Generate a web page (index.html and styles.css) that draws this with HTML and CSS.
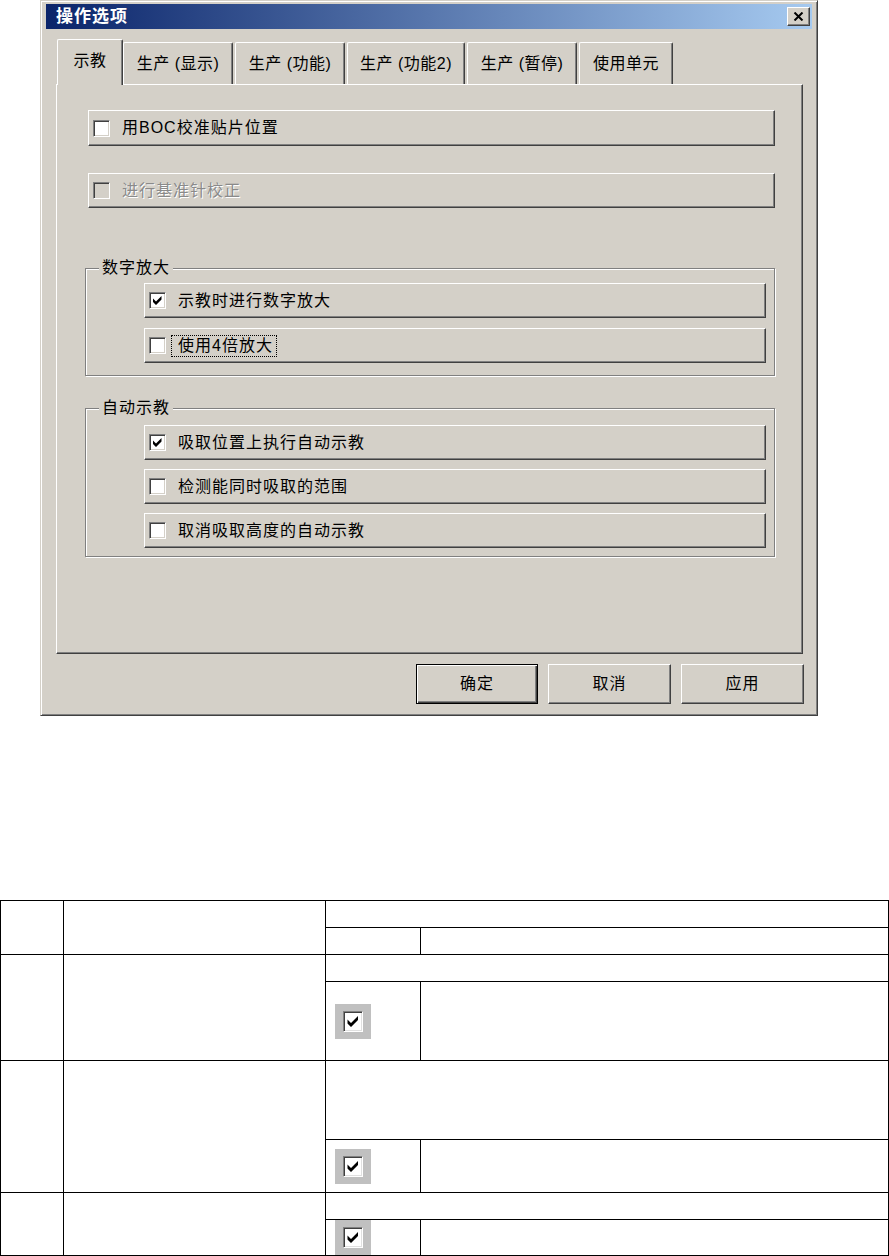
FILE: index.html
```html
<!DOCTYPE html>
<html lang="zh-CN">
<head>
<meta charset="utf-8">
<title>操作选项</title>
<link rel="stylesheet" href="styles.css">
</head>
<body>
<div class="dialog">
  <div class="titlebar">
    <span class="title">操作选项</span>
    <span class="close"><svg width="11" height="9" viewBox="0 0 11 9"><path d="M1.5 0.5 L9.5 8.5 M9.5 0.5 L1.5 8.5" stroke="#000" stroke-width="2"/></svg></span>
  </div>
  <div class="tabs">
    <div class="tab sel t1">示教</div>
    <div class="tab t2">生产 (显示)</div>
    <div class="tab t3">生产 (功能)</div>
    <div class="tab t4">生产 (功能2)</div>
    <div class="tab t5">生产 (暂停)</div>
    <div class="tab t6">使用单元</div>
  </div>
  <div class="panel">
    <div class="opt"><span class="cb"></span><span class="lbl">用BOC校准贴片位置</span></div>
    <div class="opt dis second"><span class="cb"></span><span class="lbl">进行基准针校正</span></div>
    <fieldset class="group g1">
      <legend>数字放大</legend>
      <div class="opt sub"><span class="cb"><svg width="15" height="15" viewBox="0 0 15 15"><path d="M3 5.5 L6 8.5 L11.5 3 L11.5 6.5 L6 12 L3 9 Z"/></svg></span><span class="lbl">示教时进行数字放大</span></div>
      <div class="opt sub"><span class="cb"></span><span class="lbl focus">使用4倍放大</span></div>
    </fieldset>
    <fieldset class="group g2">
      <legend>自动示教</legend>
      <div class="opt sub"><span class="cb"><svg width="15" height="15" viewBox="0 0 15 15"><path d="M3 5.5 L6 8.5 L11.5 3 L11.5 6.5 L6 12 L3 9 Z"/></svg></span><span class="lbl">吸取位置上执行自动示教</span></div>
      <div class="opt sub"><span class="cb"></span><span class="lbl">检测能同时吸取的范围</span></div>
      <div class="opt sub"><span class="cb"></span><span class="lbl">取消吸取高度的自动示教</span></div>
    </fieldset>
  </div>
  <div class="buttons">
    <div class="btn def">确定</div>
    <div class="btn">取消</div>
    <div class="btn">应用</div>
  </div>
</div>

<table class="spec">
  <colgroup>
    <col class="c1"><col class="c2"><col class="c3"><col class="c4">
  </colgroup>
  <tr class="h27"><td rowspan="2"></td><td rowspan="2"></td><td colspan="2"></td></tr>
  <tr class="h27"><td></td><td></td></tr>
  <tr class="h27"><td rowspan="2"></td><td rowspan="2"></td><td colspan="2"></td></tr>
  <tr class="h79"><td><div class="shot"><span class="tcb"><svg width="16" height="17" viewBox="0 0 16 17"><path d="M2.5 6.5 L6 10 L13 3 L13 7 L6 14 L2.5 10.5 Z"/></svg></span></div></td><td></td></tr>
  <tr class="h79"><td rowspan="2"></td><td rowspan="2"></td><td colspan="2"></td></tr>
  <tr class="h53"><td><div class="shot"><span class="tcb"><svg width="16" height="17" viewBox="0 0 16 17"><path d="M2.5 6.5 L6 10 L13 3 L13 7 L6 14 L2.5 10.5 Z"/></svg></span></div></td><td></td></tr>
  <tr class="h27"><td rowspan="2"></td><td rowspan="2"></td><td colspan="2"></td></tr>
  <tr class="h36"><td><div class="shot"><span class="tcb"><svg width="16" height="17" viewBox="0 0 16 17"><path d="M2.5 6.5 L6 10 L13 3 L13 7 L6 14 L2.5 10.5 Z"/></svg></span></div></td><td></td></tr>
</table>
</body>
</html>
```
FILE: styles.css
```css
body {
  margin: 0;
  background: #fff;
  font-family: "Liberation Sans", "Noto Sans CJK SC", sans-serif;
  color: #000;
}

.dialog {
  margin-left: 40px;
  width: 778px;
  height: 716px;
  box-sizing: border-box;
  background: #d4d0c8;
  border: 1px solid;
  border-color: #d4d0c8 #404040 #404040 #d4d0c8;
  box-shadow: inset 1px 1px 0 #fff, inset -1px -1px 0 #808080;
  padding: 3px 5px 0 5px;
  display: flex;
  flex-direction: column;
}

.titlebar {
  height: 25px;
  flex: none;
  background: linear-gradient(to right, #0a246a, #a6caf0);
  display: flex;
  align-items: center;
  justify-content: space-between;
  padding: 0 2px 0 10px;
}

.title {
  color: #fff;
  font-weight: bold;
  font-size: 17px;
  letter-spacing: 1px;
  line-height: 25px;
}

.close {
  width: 23px;
  height: 19px;
  box-sizing: border-box;
  background: #d4d0c8;
  border: 1px solid;
  border-color: #fff #404040 #404040 #fff;
  box-shadow: inset -1px -1px 0 #808080;
  display: flex;
  align-items: center;
  justify-content: center;
}

.tabs {
  flex: none;
  display: flex;
  align-items: flex-end;
  height: 45px;
  margin: 10px 0 0 11px;
}

.tab {
  box-sizing: border-box;
  height: 42px;
  background: #d4d0c8;
  border-top: 1px solid #fff;
  border-left: 1px solid #fff;
  border-right: 1px solid #404040;
  box-shadow: inset -1px 0 0 #808080;
  border-top-left-radius: 2px;
  border-top-right-radius: 2px;
  display: flex;
  align-items: center;
  justify-content: center;
  font-size: 16px;
  letter-spacing: 0.5px;
  line-height: 20px;
  white-space: nowrap;
}

.tab.sel {
  height: 46px;
  margin-bottom: -1px;
  position: relative;
  z-index: 1;
  padding-bottom: 4px;
}

.t1 { width: 66px; }
.t2 { width: 110px; }
.t3 { width: 110px; margin-left: 2px; }
.t4 { width: 118px; margin-left: 2px; }
.t5 { width: 110px; margin-left: 2px; }
.t6 { width: 94px; margin-left: 2px; }

.panel {
  flex: none;
  box-sizing: border-box;
  margin-left: 10px;
  width: 747px;
  height: 570px;
  border: 1px solid;
  border-color: #fff #404040 #404040 #fff;
  box-shadow: inset -1px -1px 0 #808080;
  padding: 25px 27px 0 31px;
}

.opt {
  box-sizing: border-box;
  height: 36px;
  display: flex;
  align-items: center;
  border: 1px solid;
  border-color: #fff #404040 #404040 #fff;
  box-shadow: inset -1px -1px 0 #808080;
  padding-left: 4px;
}

.opt.second {
  margin-top: 27px;
  height: 35px;
}

.cb {
  flex: none;
  width: 17px;
  height: 17px;
  box-sizing: border-box;
  background: #fff;
  border: 1px solid;
  border-color: #808080 #fff #fff #808080;
  box-shadow: inset 1px 1px 0 #404040, inset -1px -1px 0 #d4d0c8;
  margin-right: 12px;
}

.cb svg {
  display: block;
  fill: #000;
}

.lbl {
  font-size: 16px;
  letter-spacing: 1px;
  line-height: 20px;
  white-space: nowrap;
}

.dis .cb {
  background: #d4d0c8;
}

.dis .lbl {
  color: #8a8a8a;
  text-shadow: 1px 1px 0 #fff;
}

.focus {
  border: 1px dotted #000;
  padding: 0 3px 0 6px;
  margin-left: -7px;
}

.group {
  margin: 0 0 0 -3px;
  border: 1px solid #808080;
  box-shadow: inset 1px 1px 0 #fff, 1px 1px 0 #fff;
  min-width: 0;
}

.group legend {
  background: #d4d0c8;
  padding: 0 3px;
  margin-left: 3px;
  font-size: 16px;
  letter-spacing: 1px;
  line-height: 20px;
}

.g1 {
  margin-top: 50px;
  padding: 5px 8px 12px 10px;
}

.g2 {
  margin-top: 22px;
  padding: 7px 8px 8px 10px;
}

.opt.sub {
  height: 35px;
  margin-left: 48px;
}

.g1 .opt.sub + .opt.sub {
  margin-top: 10px;
}

.g2 .opt.sub + .opt.sub {
  margin-top: 9px;
}

.buttons {
  flex: none;
  display: flex;
  justify-content: flex-end;
  gap: 10px;
  margin-top: 10px;
  padding-right: 8px;
}

.btn {
  box-sizing: border-box;
  width: 123px;
  height: 40px;
  border: 1px solid;
  border-color: #fff #404040 #404040 #fff;
  box-shadow: inset -1px -1px 0 #808080;
  display: flex;
  align-items: center;
  justify-content: center;
  font-size: 16px;
  letter-spacing: 1px;
  line-height: 20px;
}

.btn.def {
  width: 122px;
  border-color: #000;
  box-shadow: inset 1px 1px 0 #fff, inset -1px -1px 0 #404040, inset -2px -2px 0 #808080;
}

.spec {
  margin-top: 184px;
  border-collapse: collapse;
  width: 888px;
  table-layout: fixed;
}

.spec td {
  border: 1px solid #000;
  padding: 0;
  vertical-align: middle;
}

.c1 { width: 63px; }
.c2 { width: 262px; }
.c3 { width: 95px; }
.c4 { width: 468px; }

.h27 { height: 27px; }
.h36 { height: 36px; }
.h53 { height: 53px; }
.h79 { height: 79px; }

.shot {
  width: 36px;
  height: 35px;
  box-sizing: border-box;
  margin-left: 9px;
  background: #c0c0c0;
  padding: 7px 0 0 8px;
}

.tcb {
  display: block;
  width: 20px;
  height: 21px;
  box-sizing: border-box;
  background: #fff;
  border: 1px solid;
  border-color: #808080 #fff #fff #808080;
  box-shadow: inset 1px 1px 0 #404040, inset -1px -1px 0 #e0e0e0;
  padding: 1px 0 0 1px;
}

.tcb svg {
  display: block;
  fill: #000;
}
```
